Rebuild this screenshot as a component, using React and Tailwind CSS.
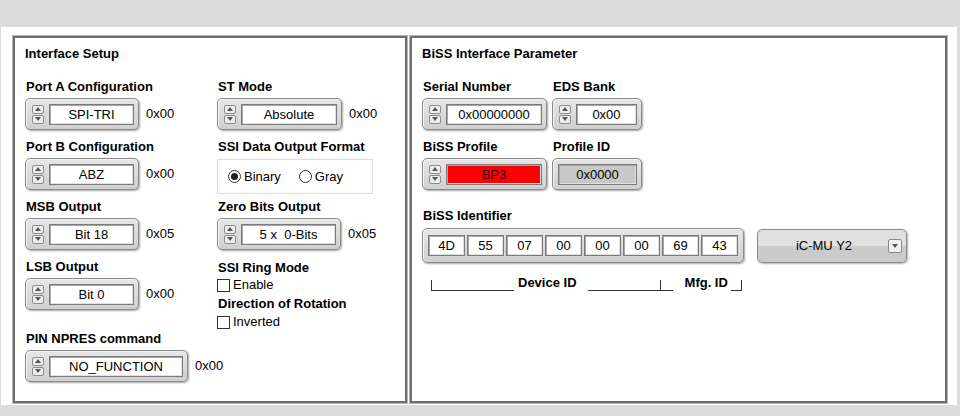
import React from "react";

const Tri = ({ up }) => (
  <svg width="6" height="4" viewBox="0 0 6 4">
    {up ? <polygon points="0,4 6,4 3,0" fill="#555" /> : <polygon points="0,0 6,0 3,4" fill="#555" />}
  </svg>
);

function SpinBtns() {
  return (
    <div className="flex flex-col gap-[1px] w-[12px] h-[19px] shrink-0">
      <div className="flex-1 rounded-[2px] border border-[#8c8c8c] bg-[#ececec] flex items-center justify-center">
        <Tri up />
      </div>
      <div className="flex-1 rounded-[2px] border border-[#8c8c8c] bg-[#ececec] flex items-center justify-center">
        <Tri />
      </div>
    </div>
  );
}

function Box({ children, className = "" }) {
  return (
    <div
      className={
        "flex items-center h-[32px] rounded-[5px] border border-[#8a8a8a] bg-[linear-gradient(#e6e6e6,#d0d0d0)] shadow-[1px_1px_2px_rgba(0,0,0,0.35),inset_1px_1px_0_#f4f4f4] " +
        className
      }
    >
      {children}
    </div>
  );
}

function FieldBox({ w, value, bg = "bg-white", color = "text-black" }) {
  return (
    <div
      className={`h-[21px] border border-[#7a7a7a] shadow-[inset_1px_1px_0_#a8a8a8,inset_-1px_-1px_0_#e0e0e0] flex items-center justify-center text-[13px] leading-none whitespace-pre ${bg} ${color}`}
      style={{ width: w }}
    >
      {value}
    </div>
  );
}

function Spinner({ w, value, bg, color }) {
  return (
    <Box className="pl-[6px] pr-[4px] gap-[5px]">
      <SpinBtns />
      <FieldBox w={w} value={value} bg={bg} color={color} />
    </Box>
  );
}

function Label({ children }) {
  return <div className="h-[16px] leading-[16px] text-[13px] font-bold pl-[1px] whitespace-nowrap">{children}</div>;
}

function Ctrl({ label, value, hex, w = 85, className = "" }) {
  return (
    <div className={className}>
      <Label>{label}</Label>
      <div className="mt-[3px] flex items-center">
        <Spinner w={w} value={value} />
        {hex && <span className="ml-[7px] text-[13px]">{hex}</span>}
      </div>
    </div>
  );
}

function Radio({ checked, label }) {
  return (
    <div className="flex items-center gap-[3px]">
      <div className="w-[13px] h-[13px] rounded-full border border-[#333] bg-white flex items-center justify-center">
        {checked && <div className="w-[7px] h-[7px] rounded-full bg-[#222]" />}
      </div>
      <span className="text-[13px]">{label}</span>
    </div>
  );
}

function Check({ label, className = "" }) {
  return (
    <div className={"flex items-center h-[16px] " + className}>
      <div className="w-[13px] h-[13px] border border-[#333] bg-white" />
      <span className="ml-[3px] text-[13px]">{label}</span>
    </div>
  );
}

const ids = ["4D", "55", "07", "00", "00", "00", "69", "43"];

export default function App() {
  return (
    <div className="w-[960px] h-[416px] bg-[#dcdcdc] pt-[27px] pl-[1px] font-['Liberation_Sans',Arial,sans-serif] text-black overflow-hidden">
      <div className="w-[956px] h-[378px] bg-white pl-[12px] pt-[9px] flex gap-[3px]">
        {/* Panel 1 */}
        <div className="w-[394px] h-[367px] border-2 border-[#6e6e6e] shadow-[0_0_0_1px_#b4b4b4] pl-[10px] pt-[8px]">
          <div className="h-[16px] leading-[16px] text-[13px] font-bold">Interface Setup</div>
          <div className="mt-[17px] flex">
            <div className="w-[192px]">
              <Ctrl label="Port A Configuration" value="SPI-TRI" hex="0x00" />
              <Ctrl className="mt-[9px]" label="Port B Configuration" value="ABZ" hex="0x00" />
              <Ctrl className="mt-[9px]" label="MSB Output" value="Bit 18" hex="0x05" />
              <Ctrl className="mt-[9px]" label="LSB Output" value="Bit 0" hex="0x00" />
              <Ctrl className="mt-[21px]" label="PIN NPRES command" value="NO_FUNCTION" hex="0x00" w={134} />
            </div>
            <div>
              <Ctrl label="ST Mode" value="Absolute" hex="0x00" w={96} />
              <div className="mt-[9px]">
                <Label>SSI Data Output Format</Label>
                <div className="mt-[4px] w-[156px] h-[35px] border border-[#dcdcdc] flex items-center pl-[10px]">
                  <Radio checked label="Binary" />
                  <div className="ml-[18px]">
                    <Radio label="Gray" />
                  </div>
                </div>
              </div>
              <Ctrl className="mt-[5px]" label="Zero Bits Output" value="5 x  0-Bits" hex="0x05" w={95} />
              <div className="mt-[10px]">
                <Label>SSI Ring Mode</Label>
                <Check className="mt-[1px]" label="Enable" />
              </div>
              <div className="mt-[3px]">
                <Label>Direction of Rotation</Label>
                <Check className="mt-[2px]" label="Inverted" />
              </div>
            </div>
          </div>
        </div>

        {/* Panel 2 */}
        <div className="w-[537px] h-[367px] border-2 border-[#6e6e6e] shadow-[0_0_0_1px_#b4b4b4] pl-[10px] pt-[8px]">
          <div className="h-[16px] leading-[16px] text-[13px] font-bold">BiSS Interface Parameter</div>
          <div className="mt-[17px] flex gap-[5px]">
            <div>
              <Ctrl label="Serial Number" value="0x00000000" w={96} />
              <div className="mt-[9px]">
                <Label>BiSS Profile</Label>
                <div className="mt-[3px] flex">
                  <Spinner w={96} value="BP3" bg="bg-[#ff0000]" color="text-[#2a0000]" />
                </div>
              </div>
            </div>
            <div>
              <Ctrl label="EDS Bank" value="0x00" w={61} />
              <div className="mt-[9px]">
                <Label>Profile ID</Label>
                <div className="mt-[3px] flex">
                  <Box className="pl-[5px] pr-[4px]">
                    <FieldBox w={79} value="0x0000" bg="bg-[#c8c8c8]" />
                  </Box>
                </div>
              </div>
            </div>
          </div>
          <div className="mt-[18px]">
            <Label>BiSS Identifier</Label>
            <div className="mt-[4px] flex items-center">
              <div className="flex items-center h-[35px] rounded-[5px] border border-[#8a8a8a] bg-[linear-gradient(#e6e6e6,#d0d0d0)] shadow-[1px_1px_2px_rgba(0,0,0,0.35),inset_1px_1px_0_#f4f4f4] pl-[5px] pr-[5px] gap-[2px]">
                {ids.map((v, i) => (
                  <FieldBox key={i} w={37} value={v} />
                ))}
              </div>
              <div className="ml-[13px] w-[150px] h-[34px] rounded-[5px] border border-[#8a8a8a] bg-[linear-gradient(#e0e0e0_50%,#cbcbcb_50%)] shadow-[1px_1px_2px_rgba(0,0,0,0.3)] flex items-center">
                <span className="flex-1 text-center text-[13px] pl-[2px]">iC-MU Y2</span>
                <div className="mr-[4px] w-[14px] h-[14px] rounded-[2px] border border-[#8a8a8a] bg-[#f0f0f0] flex items-center justify-center">
                  <svg width="6" height="4" viewBox="0 0 6 4">
                    <polygon points="0,0 6,0 3,4" fill="#555" />
                  </svg>
                </div>
              </div>
            </div>
            <div className="mt-[15px] flex items-end h-[13px] pl-[9px] text-[13px] font-bold">
              <div className="w-[1px] h-[11px] bg-[#333]" />
              <div className="w-[82px] h-[1px] bg-[#333]" />
              <span className="ml-[4px] mr-[11px] leading-none mb-[2px]">Device ID</span>
              <div className="w-[72px] h-[1px] bg-[#333]" />
              <div className="w-[1px] h-[11px] bg-[#333]" />
              <div className="w-[12px] h-[1px] bg-[#333]" />
              <span className="ml-[12px] mr-[3px] leading-none mb-[2px]">Mfg. ID</span>
              <div className="w-[10px] h-[1px] bg-[#333]" />
              <div className="w-[1px] h-[11px] bg-[#333]" />
            </div>
          </div>
        </div>
      </div>
    </div>
  );
}
